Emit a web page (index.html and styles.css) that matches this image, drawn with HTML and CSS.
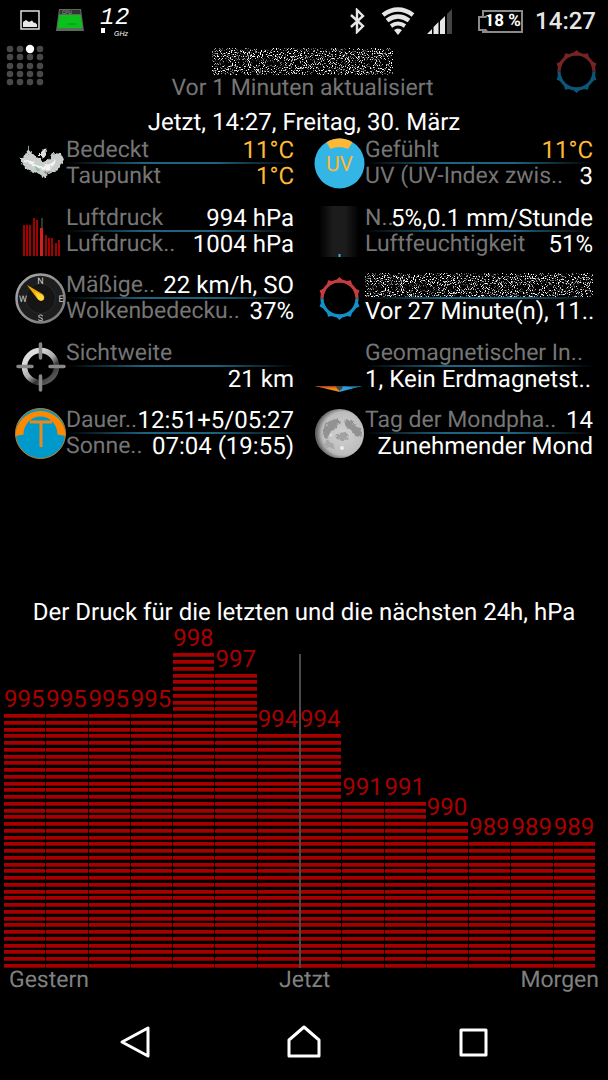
FILE: index.html
```html
<!DOCTYPE html>
<html lang="de">
<head>
  <meta charset="UTF-8" />
  <meta name="viewport" content="width=device-width, initial-scale=1" />
  <title>Wetter</title>
  <link rel="stylesheet" href="styles.css">
</head>
<body>
  <!-- shared shapes -->
  <svg class="defs" aria-hidden="true">
    <defs>
      <filter id="noise" x="0" y="0" width="100%" height="100%" color-interpolation-filters="sRGB">
        <feTurbulence type="fractalNoise" baseFrequency="0.93" numOctaves="2" seed="7" />
        <feColorMatrix values="7 0 0 0 -3.8  7 0 0 0 -3.8  7 0 0 0 -3.8  0 0 0 0 1" />
      </filter>
      <filter id="rough" x="-10%" y="-10%" width="120%" height="120%">
        <feTurbulence type="fractalNoise" baseFrequency="0.2" numOctaves="3" seed="4" result="n" />
        <feDisplacementMap in="SourceGraphic" in2="n" scale="6" xChannelSelector="R" yChannelSelector="G" />
      </filter>
      <g id="half-ring">
        <path d="M8 25.500a17.500 17.500 0 0 1 35 0" fill="none" stroke="currentColor" stroke-width="3.200" />
        <g fill="currentColor">
          <path id="spike" d="M25.500 4l6 5.500h-12z" />
          <use href="#spike" transform="rotate(-32 25.500 25.500)" />
          <use href="#spike" transform="rotate(32 25.500 25.500)" />
          <use href="#spike" transform="rotate(-68 25.500 25.500)" />
          <use href="#spike" transform="rotate(68 25.500 25.500)" />
        </g>
      </g>
      <symbol id="ring" viewBox="0 0 51 51">
        <use href="#half-ring" color="#c43c40" />
        <use href="#half-ring" color="#1490c8" transform="rotate(180 25.500 25.500)" />
      </symbol>
    </defs>
  </svg>

  <header class="status-bar">
    <div class="status-left">
      <svg width="20" height="20" viewBox="0 0 20 20">
        <path d="M1 1h18v18H1z" fill="none" stroke="#e0e0e0" stroke-width="1.500" />
        <path d="M3 17v-5l3-2 3 2 3-1.500 2 2.500 1-.5 2 2V17z" fill="#e8e8e8" />
      </svg>
      <svg width="28" height="24" viewBox="0 0 28 24">
        <path d="M3 1h22l3 22H0z" fill="#5a6b5c" />
        <path d="M4 2h20l.5 4h-21z" fill="#333" />
        <path d="M3.500 7h21L26.500 20H1.500z" fill="#0cc01c" />
        <text x="6" y="6" class="cpu-text">CPU</text>
        <path d="M12 16h9" stroke="#0a7a18" stroke-dasharray="2 1" />
      </svg>
      <svg width="32" height="36" viewBox="0 0 32 36">
        <text x="0" y="22" class="lcd">1</text>
        <text x="15" y="22" class="lcd">2</text>
        <path d="M1 26h4v5H1z" fill="#fff" />
        <text x="14" y="34" class="lcd-unit">GHz</text>
      </svg>
    </div>
    <div class="status-right">
      <svg width="16" height="26" viewBox="0 0 16 26">
        <path d="M1 7l12 11-6 6V2l6 6L1 19" fill="none" stroke="#e6e6e6" stroke-width="2.400" />
      </svg>
      <svg class="wifi" width="34" height="28" viewBox="0 0 34 28">
        <g fill="none" stroke="#e6e6e6">
          <path d="M2 8q15-11 30 0" stroke-width="4.500" />
          <path d="M6 13.500q11-8 22 0" stroke-width="4.500" />
          <path d="M10 19q7-5 14 0" stroke-width="4" />
        </g>
        <path d="M13 23q4-3 8 0l-4 5z" fill="#e6e6e6" />
      </svg>
      <svg class="signal" width="26" height="26" viewBox="0 0 26 26">
        <path d="M0 26l5-5v5zM6.500 26v-7l5-5v12zM13 26V13l5-5v18z" fill="#e6e6e6" />
        <path d="M20 26V6l5-5v25z" fill="#444" />
      </svg>
      <span class="battery">18 %</span>
      <time class="clock">14:27</time>
    </div>
  </header>

  <section class="top">
    <svg class="pages" width="40" height="44" viewBox="0 0 40 44">
      <g fill="none" stroke="#484848" stroke-width="6.600" stroke-linecap="round">
        <path d="M4 5v0M4 13v0M4 22v0M4 30v0M4 38v0" />
        <path d="M14 5v0M14 13v0M14 22v0M14 30v0M14 38v0" />
        <path d="M24 13v0M24 22v0M24 30v0M24 38v0" />
        <path d="M34 5v0M34 13v0M34 22v0M34 30v0M34 38v0" />
      </g>
      <circle cx="24" cy="5" r="4.200" fill="#fff" />
    </svg>
    <div class="place">
      <svg class="noise" width="181" height="27"><rect width="100%" height="100%" filter="url(#noise)" /></svg>
      <p class="updated">Vor 1 Minuten aktualisiert</p>
    </div>
    <svg class="refresh" width="51" height="51"><use href="#ring" /></svg>
  </section>

  <h1 class="title">Jetzt, 14:27, Freitag, 30. März</h1>

  <main class="details">
    <div class="item">
      <svg class="icon" viewBox="0 0 51 51">
        <g filter="url(#rough)">
          <path d="M4 20l9-4-1-9 4 8 6 3 5 5 7-1 4-7 8 1 2 6-4 9-10 5-5 4-7-5-8-2-6-5z" fill="#c9cdcb" />
          <path d="M25 13l5-3 2 4-3 6-4-1z" fill="#ddd" />
          <path d="M9 22l8 3 8 4 8 1 8-8" stroke="#f2f2f2" stroke-width="3" fill="none" />
          <path d="M28 34l9-2-5 5z" fill="#8c918e" />
        </g>
        <path d="M20 28l5 3-1 3-3-2z" fill="#8fc0a0" />
      </svg>
      <div class="lines">
        <div class="line"><span class="label">Bedeckt</span><span class="value warm">11°C</span></div>
        <div class="line"><span class="label">Taupunkt</span><span class="value warm">1°C</span></div>
      </div>
    </div>

    <div class="item">
      <svg class="icon" viewBox="0 0 51 51">
        <circle cx="25.500" cy="25.500" r="25" fill="#33b5e5" />
        <path d="M12.500 4.200a25 25 0 0 1 26 0L34 11q-9-4-17.500 0z" fill="#ffb833" />
        <text x="25.500" y="33" class="uv-text">UV</text>
      </svg>
      <div class="lines">
        <div class="line"><span class="label">Gefühlt</span><span class="value warm">11°C</span></div>
        <div class="line"><span class="label">UV (UV-Index zwis..</span><span class="value">3</span></div>
      </div>
    </div>

    <div class="item">
      <svg class="icon" viewBox="0 0 51 51">
        <path d="M8 19h2v31H8zM11 19h2v31h-2zM14 19h2v31h-2zM18 12h2v38h-2zM21 14h2v36h-2zM30 29h2v21h-2zM33 32h2v18h-2zM36 32h2v18h-2zM40 37h2v13h-2zM43 34h2v16h-2z" fill="#a30000" />
        <path d="M27 12v10" stroke="#666" />
        <path d="M25 22h3v28h-3z" fill="#d32020" />
      </svg>
      <div class="lines">
        <div class="line"><span class="label">Luftdruck</span><span class="value">994 hPa</span></div>
        <div class="line"><span class="label">Luftdruck..</span><span class="value">1004 hPa</span></div>
      </div>
    </div>

    <div class="item">
      <svg class="icon" viewBox="0 0 51 51">
        <linearGradient id="tube"><stop stop-color="#000" /><stop offset=".35" stop-color="#1c1c1c" /><stop offset=".65" stop-color="#1c1c1c" /><stop offset="1" stop-color="#000" /></linearGradient>
        <path d="M5 0h40v51H5z" fill="url(#tube)" />
        <path d="M24.500 48h2v3h-2z" fill="#33b5e5" />
      </svg>
      <div class="lines">
        <div class="line"><span class="label">N..</span><span class="value">5%,0.1 mm/Stunde</span></div>
        <div class="line"><span class="label">Luftfeuchtigkeit</span><span class="value">51%</span></div>
      </div>
    </div>

    <div class="item">
      <svg class="icon" viewBox="0 0 51 51">
        <linearGradient id="rim" x2="1" y2="1"><stop stop-color="#aaa" /><stop offset="1" stop-color="#777" /></linearGradient>
        <circle cx="25.500" cy="25.500" r="24" fill="#1d1d1d" stroke="url(#rim)" stroke-width="2.500" />
        <circle cx="25.500" cy="25.500" r="15" fill="#151515" stroke="#292929" />
        <g class="compass-text">
          <text x="25.500" y="11">N</text>
          <text x="46" y="29">E</text>
          <text x="25.500" y="48">S</text>
          <text x="8" y="29">W</text>
        </g>
        <path d="M12 12l15.500 9q3 3 1 6-3 2-6-1z" fill="#f5a800" />
        <path d="M20 19l7 3q3 2 1 5-3 2-5-1z" fill="#ffd83a" />
      </svg>
      <div class="lines">
        <div class="line"><span class="label">Mäßige..</span><span class="value">22 km/h, SO</span></div>
        <div class="line"><span class="label">Wolkenbedecku..</span><span class="value">37%</span></div>
      </div>
    </div>

    <div class="item">
      <svg class="icon" viewBox="0 0 51 51"><use href="#ring" /></svg>
      <div class="lines">
        <div class="line"><svg class="noise" width="100%" height="24"><rect width="100%" height="100%" filter="url(#noise)" /></svg></div>
        <div class="line"><span class="value start">Vor 27 Minute(n), 11..</span></div>
      </div>
    </div>

    <div class="item">
      <svg class="icon" viewBox="0 0 51 51">
        <linearGradient id="steel" x1=".1" y1=".3" x2=".7" y2="1"><stop stop-color="#ddd" /><stop offset=".45" stop-color="#aaa" /><stop offset=".75" stop-color="#333" /><stop offset="1" stop-color="#555" /></linearGradient>
        <circle cx="25.500" cy="25.500" r="16" fill="none" stroke="url(#steel)" stroke-width="5.500" />
        <path d="M25.500 3v14M25.500 35v14M3 25.500h14M35 25.500h14" stroke="#888" stroke-width="3.500" stroke-linecap="round" />
      </svg>
      <div class="lines">
        <div class="line"><span class="label">Sichtweite</span></div>
        <div class="line"><span class="value">21 km</span></div>
      </div>
    </div>

    <div class="item">
      <svg class="icon" viewBox="0 0 51 51">
        <path d="M1 45h24.500v6z" fill="#e88a10" />
        <path d="M1 45h24.500v1.500H9z" fill="#b8402c" />
        <path d="M25.500 45H48l-22.500 6z" fill="#2aa0d8" />
        <path d="M25.500 45H48l-8 1.500z" fill="#15567a" />
        <path d="M22 45h7q-1 4-3.500 4T22 45z" fill="#444" />
      </svg>
      <div class="lines">
        <div class="line"><span class="label">Geomagnetischer In..</span></div>
        <div class="line"><span class="value start">1, Kein Erdmagnetst..</span></div>
      </div>
    </div>

    <div class="item">
      <svg class="icon" viewBox="0 0 51 51">
        <circle cx="25.500" cy="25.500" r="25" fill="#0099cc" stroke="#c8801a" />
        <path d="M.5 28a25 25 0 1 1 50 0l-8-1.500a17 18 0 0 0-34 0z" fill="#ff8800" />
        <path d="M15 14h22M26 14v25" stroke="#e88a1a" stroke-width="3" />
      </svg>
      <div class="lines">
        <div class="line"><span class="label">Dauer..</span><span class="value">12:51+5/05:27</span></div>
        <div class="line"><span class="label">Sonne..</span><span class="value">07:04 (19:55)</span></div>
      </div>
    </div>

    <div class="item">
      <svg class="icon" viewBox="0 0 51 51">
        <radialGradient id="moon" cx=".58" cy=".5" r=".55"><stop stop-color="#d2d2d2" /><stop offset=".8" stop-color="#bcbcbc" /><stop offset="1" stop-color="#666" /></radialGradient>
        <circle cx="25.500" cy="25.500" r="24.500" fill="url(#moon)" />
        <g filter="url(#rough)" fill="#929292">
          <path d="M14 14l7-4 5 3-3 6-6 4-4 8-4-4 1-7z" />
          <path d="M32 11l5 2 8 7 2 9-6-1-5-6-5-4z" />
          <path d="M23 25l9-1 3 5-7 4-6-3z" fill="#a2a2a2" />
          <path d="M11 32l7 3 4 7-8-3z" fill="#a8a8a8" />
        </g>
        <circle cx="28" cy="40" r="2" fill="#eee" />
        <circle cx="17" cy="27" r="1.500" fill="#ddd" />
      </svg>
      <div class="lines">
        <div class="line"><span class="label">Tag der Mondpha..</span><span class="value">14</span></div>
        <div class="line"><span class="value">Zunehmender Mond</span></div>
      </div>
    </div>
  </main>

  <section class="chart">
    <h2 class="title">Der Druck für die letzten und die nächsten 24h, hPa</h2>
    <div class="plot">
      <div class="col">995<div class="bar" style="height:254px"></div></div>
      <div class="col">995<div class="bar" style="height:254px"></div></div>
      <div class="col">995<div class="bar" style="height:254px"></div></div>
      <div class="col">995<div class="bar" style="height:254px"></div></div>
      <div class="col">998<div class="bar" style="height:315px"></div></div>
      <div class="col">997<div class="bar" style="height:294px"></div></div>
      <div class="col">994<div class="bar" style="height:234px"></div></div>
      <div class="col">994<div class="bar" style="height:234px"></div></div>
      <div class="col">991<div class="bar" style="height:166px"></div></div>
      <div class="col">991<div class="bar" style="height:166px"></div></div>
      <div class="col">990<div class="bar" style="height:146px"></div></div>
      <div class="col">989<div class="bar" style="height:126px"></div></div>
      <div class="col">989<div class="bar" style="height:126px"></div></div>
      <div class="col">989<div class="bar" style="height:126px"></div></div>
      <div class="now"></div>
    </div>
    <div class="axis">
      <span>Gestern</span>
      <span>Jetzt</span>
      <span>Morgen</span>
    </div>
  </section>

  <nav class="nav-bar">
    <button aria-label="Zurück">
      <svg width="34" height="34" viewBox="0 0 34 34"><path d="M4 17L30 3v28z" /></svg>
    </button>
    <button aria-label="Startseite">
      <svg width="34" height="34" viewBox="0 0 34 34"><path d="M2 15L17 2l15 13v16H2z" /></svg>
    </button>
    <button aria-label="Übersicht">
      <svg width="34" height="34" viewBox="0 0 34 34"><path d="M5 5h25v25H5z" /></svg>
    </button>
  </nav>
</body>
</html>
```
FILE: styles.css
```css
* {
  box-sizing: border-box;
}
body {
  font-family: Roboto, sans-serif;
  font-size: 24px;
  line-height: 24px;
  text-rendering: geometricPrecision;
  background-color: #000;
  color: #fff;
  margin: 0;
  min-height: 100vh;
  display: flex;
  flex-direction: column;
}
svg {
  display: block;
  flex-shrink: 0;
}
.defs {
  position: absolute;
  width: 0;
  height: 0;
}

/* status bar */
.status-bar {
  display: flex;
  justify-content: space-between;
  align-items: center;
  height: 40px;
  padding: 0 12px 0 20px;
}
.status-left,
.status-right {
  display: flex;
  align-items: center;
}
.status-left {
  gap: 16px;
}
.status-right {
  padding-top: 2px;
}
.cpu-text {
  font-size: 5px;
  fill: #aaa;
}
.lcd {
  font: italic 24px "Liberation Mono", monospace;
  fill: #fff;
}
.lcd-unit {
  font: italic 7px "Liberation Sans", sans-serif;
  fill: #fff;
}
.wifi {
  margin-left: 15px;
}
.signal {
  margin-left: 12px;
}
.battery {
  position: relative;
  margin-left: 29px;
  width: 41px;
  height: 23px;
  border: 2px solid #8a8a8a;
  font-size: 17px;
  font-weight: 700;
  line-height: 19px;
  text-align: center;
  white-space: nowrap;
}
.battery::before {
  content: "";
  position: absolute;
  left: -6px;
  top: 4px;
  width: 6px;
  height: 11px;
  border: 2px solid #8a8a8a;
  border-right-color: #000;
  background: #000;
}
.clock {
  margin-left: 12px;
  font-weight: 500;
  color: #e6e6e6;
}

/* place and update time */
.top {
  display: flex;
  justify-content: space-between;
  padding: 4px 6px 0;
}
.pages,
.refresh {
  margin-bottom: 10px;
}
.refresh {
  opacity: 0.6;
  margin-top: 2px;
}
.place {
  display: flex;
  flex-direction: column;
  align-items: center;
  padding: 4px 0 0 8px;
}
.updated {
  margin: 1px 0 0;
  font-size: 23px;
  color: #757575;
}
.title {
  margin: 0;
  font-size: 24px;
  font-weight: 400;
  text-align: center;
}
h1.title {
  margin-top: 3px;
}

/* weather values */
.details {
  display: grid;
  grid-template-columns: 1fr 1fr;
  grid-auto-rows: 1fr;
  column-gap: 20px;
  min-height: 338px;
  margin-top: 4px;
  padding: 0 15px;
}
.item {
  display: flex;
  align-items: flex-start;
  min-width: 0;
}
.icon {
  width: 51px;
  height: 51px;
}
.lines {
  flex: 1;
  min-width: 0;
}
.line {
  display: flex;
  justify-content: space-between;
  height: 24px;
  white-space: nowrap;
}
.line:first-child {
  height: 26px;
  border-bottom: 2px solid;
  border-image: linear-gradient(to right, #000, #1d6480 35%, #1d6480 65%, #000) 1;
}
.label {
  min-width: 0;
  font-size: 23px;
  color: #757575;
}
.value {
  flex-shrink: 0;
  margin-left: auto;
}
.value.start {
  margin-left: 0;
}
.warm {
  color: #ffb833;
}
.uv-text {
  font-size: 21px;
  fill: #ffb833;
  text-anchor: middle;
}
.compass-text {
  font-size: 9px;
  fill: #ccc;
  text-anchor: middle;
}

/* pressure chart */
.chart {
  margin-top: auto;
  padding-bottom: 12px;
}
.plot {
  position: relative;
  display: grid;
  grid-template-columns: repeat(14, 1fr);
  align-items: end;
  column-gap: 1px;
  min-height: 344px;
  padding: 0 13px 0 4px;
}
.col {
  color: #a80000;
  line-height: 28px;
}
.bar {
  margin-top: 1px;
  background: repeating-linear-gradient(to top,
    #7a0000 0 1px, #a80000 1px 4px, #000 4px 7px,
    #7a0000 7px 8px, #a80000 8px 11px, #000 11px 14px,
    #7a0000 14px 15px, #a80000 15px 18px, #000 18px 20px,
    #7a0000 20px 21px, #a80000 21px 24px, #000 24px 27px);
}
.now {
  position: absolute;
  left: calc(50% - 5px);
  bottom: 0;
  width: 2px;
  height: 314px;
  background: #4a4a4a;
}
.axis {
  display: flex;
  justify-content: space-between;
  padding: 0 9px;
  font-size: 23px;
  color: #808080;
}

/* navigation */
.nav-bar {
  display: flex;
  height: 76px;
  padding: 0 50px;
}
.nav-bar button {
  flex: 1;
  display: flex;
  justify-content: center;
  align-items: center;
  padding: 0;
  border: 0;
  background: none;
}
.nav-bar path {
  fill: none;
  stroke: #fff;
  stroke-width: 3;
  stroke-linejoin: round;
}
```
